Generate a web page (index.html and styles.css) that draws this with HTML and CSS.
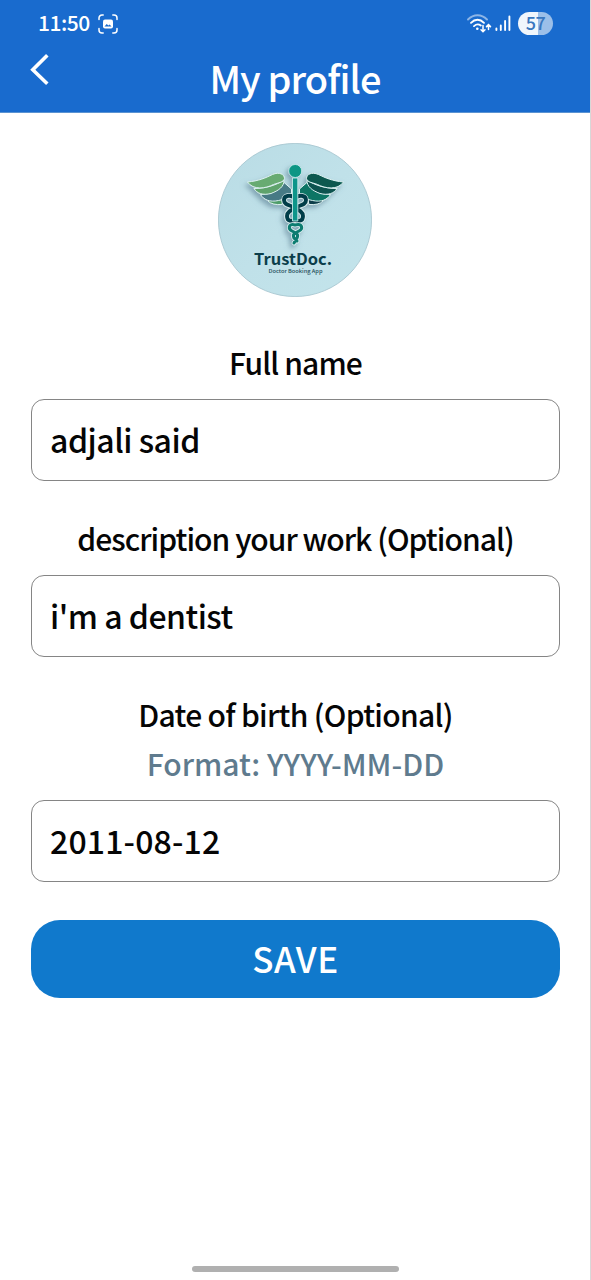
FILE: index.html
```html
<!DOCTYPE html>
<html lang="en">
<head>
<meta charset="utf-8">
<title>My profile</title>
<link rel="stylesheet" href="styles.css">
</head>
<body>
<div class="screen">
  <header class="header">
    <div class="status">
      <span class="time">11:50</span>
      <svg class="shot" width="20" height="20" viewBox="0 0 20 20" fill="none" stroke="#fff" stroke-width="1.5" stroke-linecap="round">
        <path d="M1 5.500V4a3 3 0 0 1 3-3h1.200M14.800 1H16a3 3 0 0 1 3 3v1.500M19 14.500V16a3 3 0 0 1-3 3h-1.200M5.200 19H4a3 3 0 0 1-3-3v-1.500"/>
        <rect x="5" y="5.500" width="10" height="9" rx="2" fill="#fff" stroke="none"/>
        <path d="M6.500 12.600l2.200-2.700 1.700 1.700 1.200-1.200 1.900 2.200z" fill="#196bce" stroke="none"/>
      </svg>
      <div class="indicators">
        <svg class="wifi" width="25" height="20" viewBox="0 0 25 20" fill="none" stroke="#fff" stroke-width="1.900" stroke-linecap="round">
          <path d="M1 5.500C6.500 -.2 14.500 -.2 20 5.500" stroke="#8db5e6"/>
          <path d="M4 8.800c4-4 9-4 13 0M7 12.100c2.200-2 4.600-2.200 6.800-.6"/>
          <circle cx="10.300" cy="14.800" r="1.300" fill="#fff" stroke="none"/>
          <path d="M16 11.500v6M14 15.700l2 2 2-2M21.500 15.500V11M19.500 12.600l2-2 2 2" stroke-width="1.500"/>
        </svg>
        <svg class="signal" width="16" height="17" viewBox="0 0 16 17" stroke="#fff" stroke-width="1.900" stroke-linecap="round">
          <path d="M1.400 13.500v1.500M5.800 10.500v4.500M10.100 6v9M14.400 1.500v13.500"/>
        </svg>
        <span class="battery">57</span>
      </div>
    </div>
    <div class="titlebar">
      <svg class="back" width="20" height="32" viewBox="0 0 20 32" fill="none" stroke="#fff" stroke-width="3.600">
        <path d="M17.300 1.300L2.800 15.700l14.500 14"/>
      </svg>
      <h1 class="title">My profile</h1>
    </div>
  </header>
  <main class="form">
    <svg class="avatar" width="154" height="154" viewBox="0 0 154 154">
      <defs>
        <linearGradient id="disc" x1="0" y1="0" x2="1" y2="1">
          <stop offset="0" stop-color="#b9dce5"/><stop offset=".5" stop-color="#c0e1e9"/><stop offset="1" stop-color="#c3e4eb"/>
        </linearGradient>
        <filter id="relief" x="-20%" y="-20%" width="140%" height="140%">
          <feDropShadow dx="-2.500" dy="3" stdDeviation="2.500" flood-color="#587c91" flood-opacity=".6"/>
        </filter>
      </defs>
      <circle cx="77" cy="77" r="76.600" fill="url(#disc)" stroke="#a3c3cd" stroke-width=".8"/>
      <g filter="url(#relief)">
        <g stroke="#dcf0f0" stroke-width="1" stroke-linejoin="round">
          <path d="M50 58c3 3 8 4 14 3.500l2-9-8-2z" fill="#4f9d6b"/>
          <path d="M42.500 51.500c3 5 9 8 18 6l13-3V46l-8-7c-3 8-11 12-23 12.500z" fill="#467a85"/>
          <path d="M36 45.500c3 5 9 7 17 5 8-3 13-7 13-13-8 4-16 8-30 8z" fill="#5fa36c"/>
          <path d="M29.500 39c11-1 18-4 25-7.500 7-3 12 0 12 4-1 4-6 4-11 6-8 4-20 6-26-2.500z" fill="#68ab72"/>
          <path d="M105 58c-3 3-8 4-14 3.500l-2-9 8-2z" fill="#073c49"/>
          <path d="M112.500 51.500c-3 5-9 8-18 6l-13-3V46l8-7c3 8 11 12 23 12.500z" fill="#087465"/>
          <path d="M119 45.500c-3 5-9 7-17 5-8-3-13-7-13-13 8 4 16 8 30 8z" fill="#07524f"/>
          <path d="M125.500 39c-11-1-18-4-25-7.500-7-3-12 0-12 4 1 4 6 4 11 6 8 4 20 6 26-2.500z" fill="#075950"/>
        </g>
        <g fill="none" stroke-linecap="round" stroke-linejoin="round">
          <path id="coils" d="M77 56c-3-5-11-4-11 1 0 6 8 5 11 8 4 2 8 4 8 8 0 6-5 5-8 4M77 56c3-5 11-4 11 1 0 6-8 5-11 8-4 2-8 4-8 8 0 6 5 5 8 4" stroke="#d9edef" stroke-width="5.600"/>
          <path d="M77 56c-3-5-11-4-11 1 0 6 8 5 11 8 4 2 8 4 8 8 0 6-5 5-8 4M77 56c3-5 11-4 11 1 0 6-8 5-11 8-4 2-8 4-8 8 0 6 5 5 8 4" stroke="#063d49" stroke-width="3.900"/>
          <path d="M77 82c-7-2-7 4-3 6s7 3 5 7l-3 5M77 82c8-2 8 4 4 6s-7 3-5 7l3 3" stroke="#d9edef" stroke-width="4.600"/>
          <path d="M77 82c-7-2-7 4-3 6s7 3 5 7l-3 5M77 82c8-2 8 4 4 6s-7 3-5 7l3 3" stroke="#087b70" stroke-width="3"/>
        </g>
        <path d="M74.500 35h5.300v43h-5.300z" fill="#10958a" stroke="#c5e9e8" stroke-width=".9"/>
        <circle cx="77.200" cy="28" r="6.500" fill="#079684" stroke="#d2eeef" stroke-width=".8"/>
      </g>
      <text class="logo-name" x="36" y="121.500" textLength="78" lengthAdjust="spacingAndGlyphs">TrustDoc.</text>
      <text class="logo-sub" x="50.500" y="130" textLength="54" lengthAdjust="spacingAndGlyphs">Doctor Booking App</text>
    </svg>

    <label class="label" for="name">Full name</label>
    <input class="field name-field" id="name" type="text" value="adjali said">
    <label class="label label-work" for="work">description your work (Optional)</label>
    <input class="field work-field" id="work" type="text" value="i'm a dentist">
    <label class="label label-birth" for="birth">Date of birth (Optional)</label>
    <p class="hint">Format: YYYY-MM-DD</p>
    <input class="field birth-field" id="birth" type="text" value="2011-08-12">
    <button class="save" type="button">SAVE</button>
  </main>
  <div class="home-handle"></div>
</div>
</body>
</html>
```
FILE: styles.css
```css
* { box-sizing: border-box; }

body {
  margin: 0;
  background: #fff;
  color: #050505;
  font-family: "Noto Sans CJK SC", "Noto Sans", sans-serif;
  font-weight: 500;
}

.screen {
  display: flex;
  flex-direction: column;
  width: 591px;
  height: 1280px;
  overflow: hidden;
  border-right: 1px solid #d8d8d8;
}

.header {
  height: 113px;
  flex: none;
  background: #196bce;
  color: #fff;
  border-bottom: 1px solid #5b93d2;
}

.status {
  display: flex;
  align-items: center;
  height: 47px;
  padding: 0 37px 0 38px;
}

.time {
  height: 33px;
  font-size: 21px;
  line-height: 30px;
  letter-spacing: -0.5px;
}

.shot { margin-left: 8px; }
.indicators { display: flex; align-items: center; margin-left: auto; }
.wifi { margin-right: 3px; }
.signal { margin-right: 7px; }

.battery {
  width: 35px;
  height: 23px;
  border-radius: 12px;
  background: linear-gradient(90deg, #f0f6fc 56%, #9bbfe9 56%);
  color: #3977bf;
  font-size: 18px;
  line-height: 21px;
  letter-spacing: -0.6px;
  text-align: center;
}

.titlebar {
  display: grid;
  grid-template-columns: 80px 1fr 80px;
  height: 65px;
}

.back { margin: 7px 0 0 30px; }

.title {
  margin: 3px 0 0;
  font-size: 38px;
  font-weight: 500;
  line-height: 56px;
  letter-spacing: -0.9px;
  text-align: center;
  white-space: nowrap;
}

.form {
  display: flex;
  flex-direction: column;
  padding: 30px 30px 0 31px;
}

.avatar { align-self: center; margin-right: 1px; }

.label, .hint {
  margin: 0;
  height: 40px;
  font-size: 30px;
  line-height: 40px;
  text-align: center;
  white-space: nowrap;
}

.label { margin-top: 45px; letter-spacing: -0.9px; }
.label-work, .label-birth { margin-top: 37px; }
.label-work { letter-spacing: -0.96px; }
.label-birth { letter-spacing: -0.7px; }
.hint { margin-top: 9px; color: #5f7b8e; }

.field {
  width: 100%;
  height: 82px;
  margin: 17px 0 0;
  padding: 0 18px 2px;
  border: 1.5px solid #858585;
  border-radius: 13px;
  background: #fff;
  color: #050505;
  font: inherit;
  font-size: 32px;
  letter-spacing: -0.5px;
  outline: none;
}

.birth-field { letter-spacing: 0.15px; }

.save {
  height: 78px;
  margin: 38px 0 0;
  padding: 0 0 3px;
  border: 0;
  border-radius: 29px;
  background: #1079cc;
  color: #fff;
  font: inherit;
  font-size: 35px;
  letter-spacing: 0.6px;
}

.home-handle {
  width: 207px;
  height: 6px;
  margin: auto auto 8px;
  border-radius: 3px;
  background: #b0b0b0;
}

.logo-name {
  fill: #0b3e4b;
  font-family: "Noto Sans CJK SC", sans-serif;
  font-size: 15.5px;
  font-weight: 700;
}

.logo-sub {
  fill: #264e5c;
  font-family: "Noto Sans CJK SC", sans-serif;
  font-size: 5px;
}
```
